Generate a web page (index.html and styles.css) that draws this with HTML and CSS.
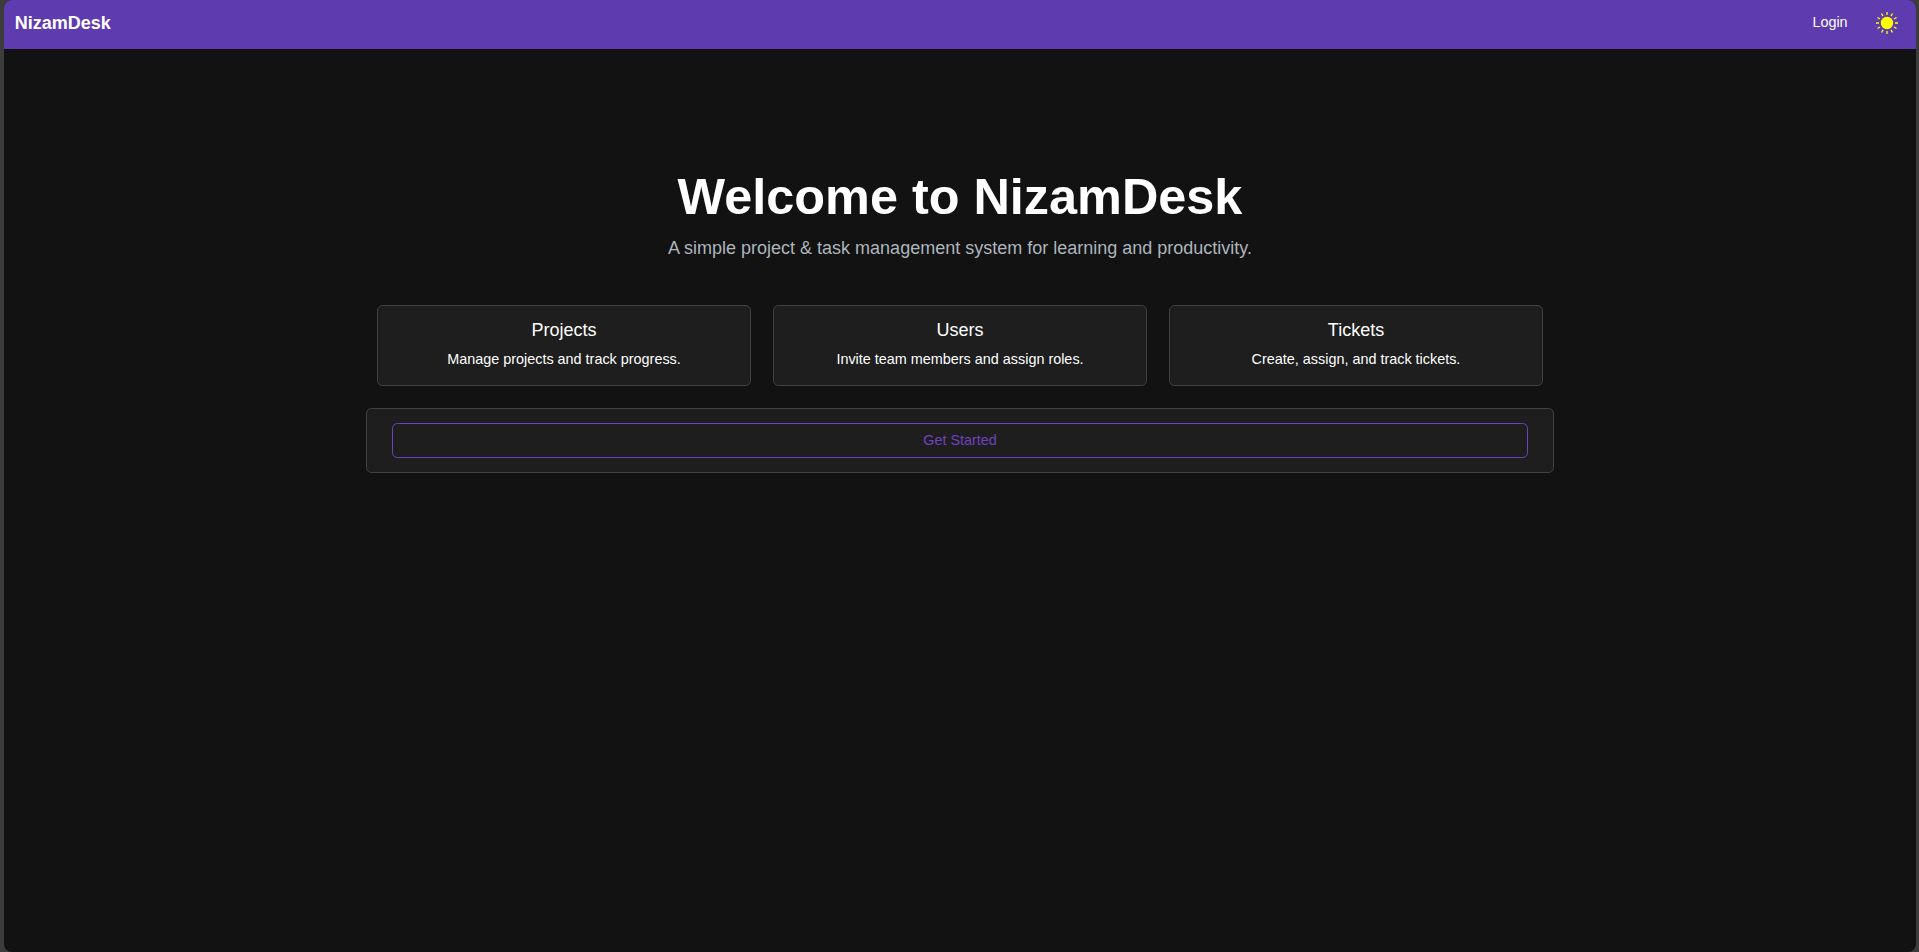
FILE: index.html
```html
<!DOCTYPE html>
<html lang="en">
<head>
<meta charset="utf-8">
<title>NizamDesk</title>
<link rel="stylesheet" href="styles.css">
</head>
<body>
<div class="window">
  <nav class="navbar">
    <a class="brand">NizamDesk</a>
    <div class="nav-right">
      <a class="nav-link">Login</a>
      <svg class="sun" viewBox="-12 -12 24 24">
        <circle r="6.2" fill="#ff0"/>
        <g stroke="#ff0" stroke-width="1.3">
          <path d="M0-8V-11M0 8V11M-8 0H-11M8 0H11"/>
          <path transform="rotate(30)" d="M0-8V-11M0 8V11M-8 0H-11M8 0H11"/>
          <path transform="rotate(60)" d="M0-8V-11M0 8V11M-8 0H-11M8 0H11"/>
        </g>
      </svg>
    </div>
  </nav>
  <main class="container">
    <h1>Welcome to NizamDesk</h1>
    <p class="lead">A simple project &amp; task management system for learning and productivity.</p>
    <div class="row">
      <div class="card"><h5>Projects</h5><p>Manage projects and track progress.</p></div>
      <div class="card"><h5>Users</h5><p>Invite team members and assign roles.</p></div>
      <div class="card"><h5>Tickets</h5><p>Create, assign, and track tickets.</p></div>
    </div>
    <div class="card start"><a class="btn">Get Started</a></div>
  </main>
</div>
</body>
</html>
```
FILE: styles.css
```css
* { box-sizing: border-box; }
html { font-size: 14.4px; }
body {
  margin: 0;
  height: 952px;
  padding: 0 3px 0 4px;
  background: #3c3c3c;
  color: #fff;
  font-family: "Liberation Sans", Arial, sans-serif;
  line-height: 1.5;
  overflow: hidden;
}
.window {
  height: 952px;
  background: #121212;
  border-radius: 8px;
  overflow: hidden;
}
.navbar {
  height: 49px;
  padding: 0 17px 0 10.8px;
  background: #5e3baf;
  display: flex;
  justify-content: space-between;
}
.brand {
  margin-top: 10px;
  font-size: 18px;
  font-weight: 700;
}
.nav-right { display: flex; }
.nav-link { margin: 12px 27.4px 0 0; }
.sun { width: 24px; height: 24px; margin-top: 11.3px; }
.container {
  width: 1188px;
  margin: 0 auto;
  padding-top: 118.2px;
  text-align: center;
}
h1, h5, p { margin: 0; }
h1 { font-size: 3.5rem; line-height: 1.2; margin-bottom: .5rem; }
.lead { font-size: 1.25rem; color: #adb5bd; margin-bottom: 3rem; }
.row {
  display: grid;
  grid-template-columns: repeat(3, 1fr);
  gap: 1.5rem;
  padding: 0 .75rem;
  margin-bottom: 1.5rem;
}
.card {
  background: #1e1e1e;
  border: 1px solid #424242;
  border-radius: .375rem;
  padding: 1rem;
}
.card h5 { font-size: 1.25rem; font-weight: 400; line-height: 1.2; margin-bottom: .5rem; }
.start { padding: 1rem 1.75rem; }
.btn {
  display: block;
  padding: .375rem .75rem;
  border: 1px solid #6f42c1;
  border-radius: .375rem;
  color: #6f42c1;
}
```
